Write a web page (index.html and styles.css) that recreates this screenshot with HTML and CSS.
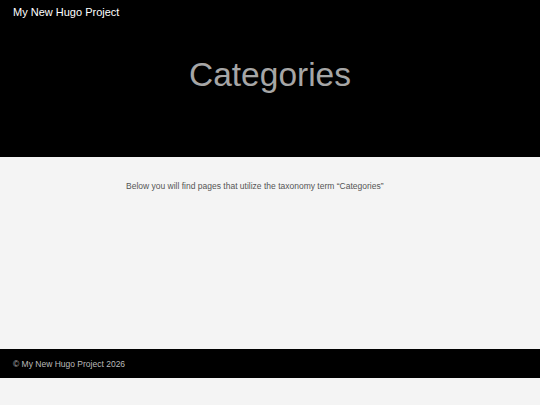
FILE: index.html
```html
<!DOCTYPE html>
<html lang="en">
<head>
<meta charset="utf-8">
<title>Categories | My New Hugo Project</title>
<link rel="stylesheet" href="styles.css">
</head>
<body>
<header class="hero">
  <nav class="nav">
    <a class="brand" href="#">My New Hugo Project</a>
  </nav>
  <div class="hero-title">
    <h1>Categories</h1>
  </div>
</header>
<main class="main">
  <div class="content">
    <p>Below you will find pages that utilize the taxonomy term “Categories”</p>
  </div>
</main>
<footer class="footer">
  <span class="copy">© My New Hugo Project 2026</span>
</footer>
</body>
</html>
```
FILE: styles.css
```css
html, body {
  margin: 0;
  padding: 0;
}
body {
  background: #f4f4f4;
  font-family: "Liberation Sans", Arial, sans-serif;
}
.hero {
  background: #000;
  height: 157px;
  display: flex;
  flex-direction: column;
}
.nav {
  padding: 2px 13px 0;
  height: 20px;
}
.brand {
  color: #fff;
  text-decoration: none;
  font-size: 11px;
  line-height: 14px;
}
.hero-title {
  display: flex;
  justify-content: center;
}
.hero-title h1 {
  margin: 33px 0 0;
  font-size: 33.5px;
  line-height: 40px;
  font-weight: 400;
  color: #a6a6a6;
}
.main {
  height: 192px;
}
.content {
  width: 288px;
  margin: 0 auto;
  padding-top: 23px;
}
.content p {
  margin: 0;
  font-size: 8.5px;
  line-height: 12px;
  color: #555;
}
.footer {
  background: #000;
  height: 29px;
  display: flex;
  align-items: center;
  padding: 0 13px;
}
.copy {
  color: #bbb;
  font-size: 8.5px;
}
```
